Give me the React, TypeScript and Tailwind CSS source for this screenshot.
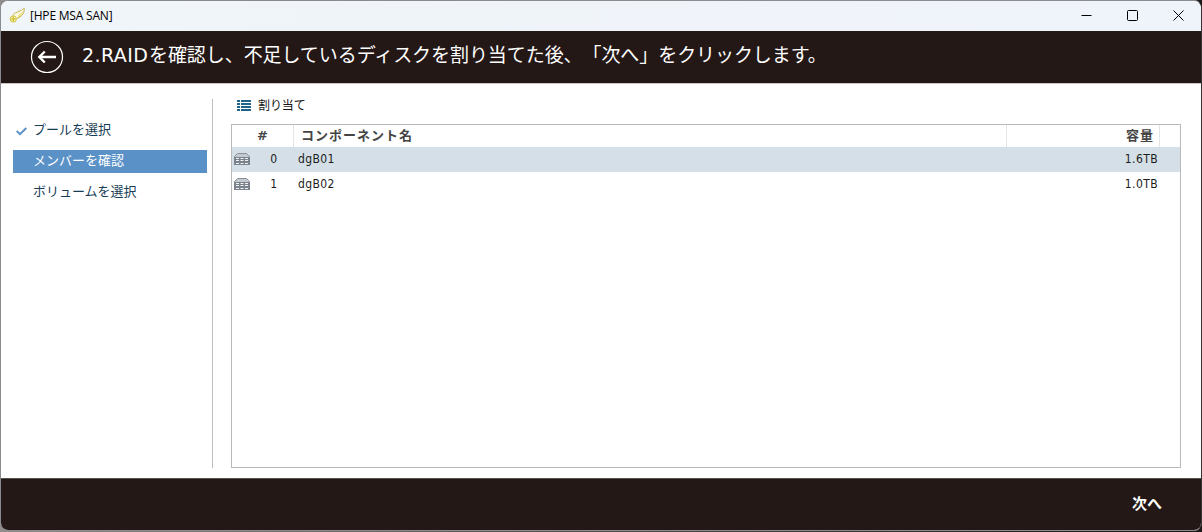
import clsx from "clsx";

const steps = [
  { label: "プールを選択", state: "done" },
  { label: "メンバーを確認", state: "current" },
  { label: "ボリュームを選択", state: "next" },
];

const components = [
  { id: 0, name: "dgB01", capacity: "1.6TB" },
  { id: 1, name: "dgB02", capacity: "1.0TB" },
];

const WingIcon = () => (
  <svg width="17" height="17" viewBox="0 0 17 17" fill="none">
    <path d="M3.8 8.6C5 5 10.5 5.5 15.2 1.2C15.6 4.5 14.3 9.3 7.8 11.5" fill="#fbf8dc" stroke="#b9aa48" strokeWidth="0.9" />
    <path d="M9.5 8.5L13.8 5.5M9 10.3L12.6 8.4" stroke="#dccd45" strokeWidth="0.9" />
    <circle cx="4.3" cy="12" r="3.1" fill="#fbf7bd" stroke="#cdbc3a" strokeWidth="0.9" />
    <path d="M4.3 9.4V14.6M1.7 12H6.9" stroke="#c9b51d" strokeWidth="1.2" />
  </svg>
);

const BackIcon = () => (
  <svg width="34" height="34" viewBox="0 0 34 34" fill="none" stroke="#fff">
    <circle cx="17" cy="17" r="15.5" strokeWidth="1.2" />
    <path d="M26 17H9.5M14.8 11.5L9.3 17L14.8 22.5" strokeWidth="2.4" />
  </svg>
);

const ListIcon = () => (
  <svg width="14" height="11" viewBox="0 0 14 11" fill="#1f6388">
    <path d="M0 0h3v2H0zM4 0h10v2H4zM0 3h3v2H0zM4 3h10v2H4zM0 6h3v2H0zM4 6h10v2H4zM0 9h3v2H0zM4 9h10v2H4z" />
  </svg>
);

const DiskGroupIcon = () => (
  <svg width="16" height="12" viewBox="0 0 16 12">
    <path d="M3.5 0.5H12.5L15.5 3.5V11.5H0.5V3.5Z" fill="#c5cad0" stroke="#8a9098" />
    <path d="M0 4h16v8H0z" fill="#7b828c" />
    <path
      d="M2 5h3v1H2zM6.5 5h3v1h-3zM11 5h3v1h-3zM2 7h3v1H2zM6.5 7h3v1h-3zM11 7h3v1h-3zM2 10h3v1H2zM6.5 10h3v1h-3zM11 10h3v1h-3z"
      fill="#f1f4f6"
    />
  </svg>
);

const TitleBar = () => (
  <div className="flex h-[30px] shrink-0 items-center bg-linear-to-r from-[#f0f5f9] to-[#eff3fa]">
    <div className="ml-2 mb-0.5">
      <WingIcon />
    </div>
    <span className="ml-1 font-['Open_Sans',sans-serif] text-[12px] leading-4 tracking-[-0.2px] text-black">
      [HPE MSA SAN]
    </span>
    <div className="ml-auto mr-[17px] mb-0.5 flex items-center gap-[35px]">
      <svg width="11" height="11" viewBox="0 0 11 11" stroke="#000">
        <path d="M0.5 5.5H10.5" />
      </svg>
      <svg width="11" height="11" viewBox="0 0 11 11" fill="none" stroke="#000">
        <rect x="0.5" y="0.5" width="10" height="10" rx="1" />
      </svg>
      <svg width="11" height="11" viewBox="0 0 11 11" stroke="#000">
        <path d="M0.5 0.5L10.5 10.5M10.5 0.5L0.5 10.5" />
      </svg>
    </div>
  </div>
);

const Header = () => (
  <header className="flex h-[53px] shrink-0 items-center border-b border-[#c8c4c2] bg-[#241816] text-white">
    <div className="ml-[29px]">
      <BackIcon />
    </div>
    <h1 className="ml-[18px] mb-[4px] flex whitespace-nowrap text-[19px] leading-6 [text-spacing-trim:space-all]">
      <span className="w-[67px] font-['DejaVu_Sans',sans-serif] tracking-[0.4px]">2.RAID</span>
      <span className="tracking-[-0.07px]">を確認し、不足しているディスクを割り当てた後、「次へ」をクリックします。</span>
    </h1>
  </header>
);

const Sidebar = () => (
  <nav className="mt-[15px] flex h-[369px] w-[212px] shrink-0 flex-col gap-2 border-r border-[#bdbdbd] pl-3 pr-[5px] pt-5 text-[13px]">
    {steps.map((step) => (
      <div
        key={step.label}
        className={clsx(
          "flex h-[23px] items-center whitespace-nowrap",
          step.state === "current" ? "bg-[#5a91c7] text-white" : "text-[#173c55]",
        )}
      >
        <span className="w-5 shrink-0 pl-[3px]">
          {step.state === "done" && (
            <svg width="11" height="9" viewBox="0 0 11 9" fill="none" stroke="#5a91c7" strokeWidth="2" className="mt-0.5">
              <path d="M0.7 4L4 7.2L10.3 1" />
            </svg>
          )}
        </span>
        <span className="pb-px">{step.label}</span>
      </div>
    ))}
  </nav>
);

const ComponentTable = () => (
  <div className="h-[344px] w-[950px] border border-[#bababa] text-[12px] text-[#1c1c1c]">
    <div className="flex h-[22px] text-[13px] font-bold leading-[21px] text-[#444]">
      <div className="w-[62px] border-r border-[#e4e4e4] pl-[25px] font-['DejaVu_Sans',sans-serif]">#</div>
      <div className="w-[713px] border-r border-[#e4e4e4] pl-[7px] tracking-[1px]">コンポーネント名</div>
      <div className="w-[153px] border-r border-[#e4e4e4] pr-[5px] text-right tracking-[1px]">容量</div>
    </div>
    {components.map((item, i) => (
      <div key={item.id} className={clsx("flex h-[25px] items-center", i === 0 && "bg-[#d4dfe7]")}>
        <div className="mb-0.5 w-[18px] pl-[2px]">
          <DiskGroupIcon />
        </div>
        <span className="w-[27px] pb-px text-right">{item.id}</span>
        <span className="ml-[21px] pb-px tracking-[0.4px]">{item.name}</span>
        <span className="ml-auto mr-[22px] pb-px tracking-[0.4px]">{item.capacity}</span>
      </div>
    ))}
  </div>
);

const App = () => {
  return (
    <div className="h-[532px] w-[1202px] overflow-hidden bg-linear-to-r from-[#8f8c8b] to-[#1a1717]">
      <div className="flex h-[531px] w-[1202px] flex-col overflow-hidden rounded-lg border border-[#8b8b8f] border-r-[#353535] bg-white font-['DejaVu_Sans_Condensed','DejaVu_Sans','Noto_Sans_CJK_JP',sans-serif]">
        <TitleBar />
        <Header />
        <main className="flex min-h-0 flex-1">
          <Sidebar />
          <section className="ml-[18px] pt-[11px]">
            <button className="flex h-[22px] items-center gap-[7px] pl-[6px] text-[12px] text-[#151515]">
              <span className="mb-px">
                <ListIcon />
              </span>
              <span className="tracking-[-0.1px]">割り当て</span>
            </button>
            <div className="mt-[7px]">
              <ComponentTable />
            </div>
          </section>
        </main>
        <footer className="flex h-[52px] shrink-0 items-center justify-end border-t border-[#505550] bg-[#241816] pr-[39px] text-white">
          <button className="text-[15px] font-bold">次へ</button>
        </footer>
      </div>
    </div>
  );
};

export default App;
